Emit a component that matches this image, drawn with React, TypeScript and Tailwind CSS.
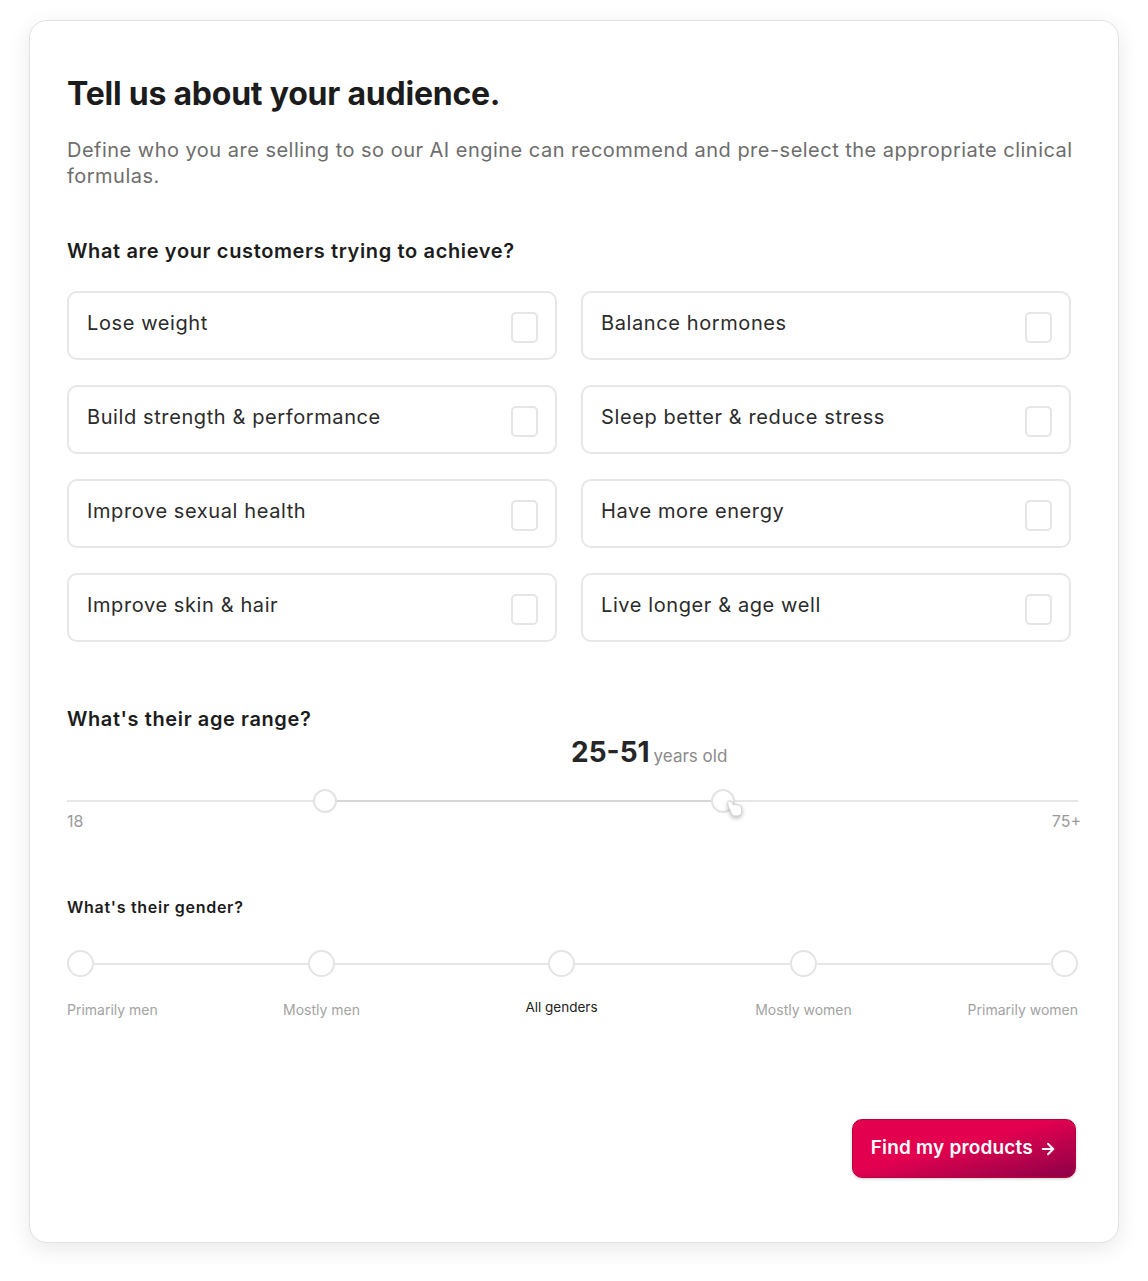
import { ArrowRight } from 'lucide-react';

const goals = [
  'Lose weight',
  'Balance hormones',
  'Build strength & performance',
  'Sleep better & reduce stress',
  'Improve sexual health',
  'Have more energy',
  'Improve skin & hair',
  'Live longer & age well',
];

function GoalCard({ label }: { label: string }) {
  return (
    <label className="flex h-[69px] items-start justify-between rounded-[10px] border-2 border-[#e7e7e7] bg-white pl-[18px] pr-[17px] pt-[16px]">
      <span className="text-[20px] leading-7 tracking-[0.03em] text-[#2b2b2b]">{label}</span>
      <span className="mt-[3px] h-[31px] w-[27px] rounded-[5px] border-2 border-[#e5e5e5]" />
    </label>
  );
}

function Dot() {
  return <span className="h-[27px] w-[27px] shrink-0 rounded-full border-2 border-[#e4e4e4] bg-white" />;
}

function Line({ className }: { className: string }) {
  return <span className={`h-[2px] bg-[#e6e6e6] ${className}`} />;
}

export default function App() {
  return (
    <div className="min-h-[1281px] bg-white pl-[29px] pt-[20px] font-['Inter',sans-serif]">
      <div className="w-[1090px] rounded-[18px] border border-[#e2e2e2] bg-white pb-[64px] pl-[37px] pr-[40px] pt-[53px] shadow-[0_6px_22px_rgba(0,0,0,0.09)]">
        {/* Header */}
        <h1 className="text-[32px] font-bold leading-10 tracking-[-0.007em] text-[#1c1c1c]">
          Tell us about your audience.
        </h1>
        <p className="mt-[23px] text-[20px] leading-[26px] tracking-[0.024em] text-[#6d6d6d]">
          Define who you are selling to so our AI engine can recommend and pre-select the appropriate clinical
          formulas.
        </p>

        {/* Goals */}
        <h2 className="mt-[48px] text-[20px] font-semibold leading-7 tracking-[0.032em] text-[#1c1c1c]">
          What are your customers trying to achieve?
        </h2>
        <div className="mt-[26px] grid w-[1004px] grid-cols-2 gap-x-[24px] gap-y-[25px]">
          {goals.map((g) => (
            <GoalCard key={g} label={g} />
          ))}
        </div>

        {/* Age */}
        <h2 className="mt-[63px] text-[20px] font-semibold leading-7 tracking-[0.03em] text-[#1c1c1c]">
          What's their age range?
        </h2>
        <div className="mt-[1px] flex items-baseline gap-[4px] pl-[504px]">
          <span className="text-[28px] font-bold leading-9 text-[#262626]">25-51</span>
          <span className="text-[17px] text-[#8a8a8a]">years old</span>
        </div>
        <div className="relative mt-[19px] flex h-6 items-center">
          <div className="h-[2px] w-full bg-[#e6e6e6]" />
          <div className="absolute left-[258px] top-[11px] h-[2px] w-[398px] bg-[#d6d6d6]" />
          <span className="absolute left-[246px] top-0 h-6 w-6 rounded-full border-2 border-[#e3e3e3] bg-white" />
          <span className="absolute left-[644px] top-0 h-6 w-6 rounded-full border-2 border-[#e3e3e3] bg-white" />
          <svg
            className="absolute left-[658px] top-[8px] drop-shadow-[0_2px_2px_rgba(0,0,0,0.25)]"
            width="20"
            height="22"
            viewBox="0 0 16 16"
          >
            <path
              d="M3 2.5c1.2-.6 2.3.2 2.8 1.2l1 1.8c.6-.8 1.8-.8 2.4 0 .7-.5 1.7-.3 2.2.5.8-.2 1.6.4 1.7 1.3l.3 3.2c.1 2-1.4 3.6-3.4 3.8l-1.6.1c-1.3.1-2.5-.6-3.1-1.7L2.6 6.3C2 5 2 3.1 3 2.5z"
              fill="#fff"
              stroke="#d6d6d6"
              strokeWidth="0.9"
            />
          </svg>
        </div>
        <div className="mt-[-2px] flex justify-between text-[16px] leading-5 text-[#9a9a9a]">
          <span>18</span>
          <span className="mr-[-3px]">75+</span>
        </div>

        {/* Gender */}
        <h3 className="mt-[64px] text-[16px] font-semibold leading-6 tracking-[0.045em] text-[#1c1c1c]">
          What's their gender?
        </h3>
        <div className="mt-[31px] flex items-center">
          <Dot />
          <Line className="w-[214px]" />
          <Dot />
          <Line className="w-[213px]" />
          <Dot />
          <Line className="w-[215px]" />
          <Dot />
          <Line className="flex-1" />
          <Dot />
        </div>
        <div className="mt-[23px] flex items-start text-[14px] leading-5 text-[#a3a3a3]">
          <div className="flex w-[27px] justify-start whitespace-nowrap">Primarily men</div>
          <div className="w-[214px]" />
          <div className="flex w-[27px] justify-center whitespace-nowrap">Mostly men</div>
          <div className="w-[213px]" />
          <div className="flex w-[27px] justify-center whitespace-nowrap">
            <span className="-mt-[3px] text-[13.5px] text-[#222]">All genders</span>
          </div>
          <div className="w-[215px]" />
          <div className="flex w-[27px] justify-center whitespace-nowrap">Mostly women</div>
          <div className="flex-1" />
          <div className="flex w-[27px] justify-end whitespace-nowrap">Primarily women</div>
        </div>

        {/* Submit */}
        <div className="mt-[99px] flex justify-end">
          <button className="mr-[2px] flex h-[59px] items-center gap-[6px] rounded-[10px] border border-[#b8003f] bg-linear-to-br from-[#e3004f] from-45% to-[#8c0046] px-[18px] text-[19px] font-semibold tracking-[0.01em] text-white shadow-[0_1px_3px_rgba(0,0,0,0.2)]">
            Find my products
            <ArrowRight size={18} strokeWidth={2.6} />
          </button>
        </div>
      </div>
    </div>
  );
}
